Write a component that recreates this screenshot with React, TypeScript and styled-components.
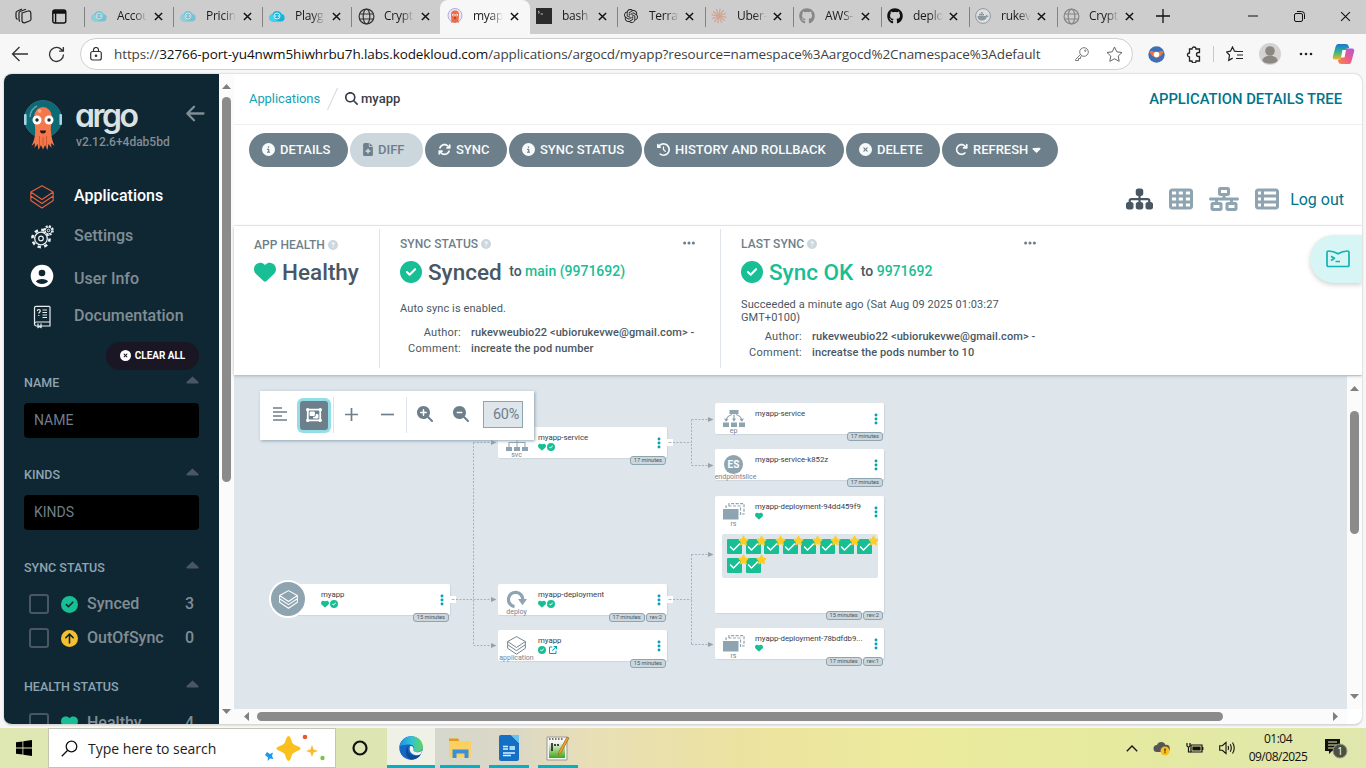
import React from 'react';
import styled, { createGlobalStyle, css } from 'styled-components';
import {
  FaCircleInfo, FaFileMedical, FaArrowsRotate, FaClockRotateLeft, FaCircleXmark, FaArrowRotateRight, FaCaretDown,
  FaSitemap, FaTableCells, FaNetworkWired, FaTableList, FaMagnifyingGlass, FaMagnifyingGlassPlus, FaMagnifyingGlassMinus,
  FaObjectGroup, FaHeart, FaCircleCheck, FaCircleArrowUp, FaCircleQuestion, FaEllipsis,
  FaStar, FaCheck, FaGithub, FaArrowUpRightFromSquare,
} from 'react-icons/fa6';
import { SiOpenai } from 'react-icons/si';

const GREEN = '#18be94';
const SLATE = '#6d7f8b';
const STEEL = '#8fa4b1';

const Global = createGlobalStyle`
  html, body { margin: 0; padding: 0; overflow: hidden; }
  * { box-sizing: border-box; }
  svg { display: block; flex: none; }
`;

const Screen = styled.div`
  width: 1366px;
  height: 768px;
  display: flex;
  flex-direction: column;
  overflow: hidden;
  background: #f7f7f7;
  font-family: Roboto, 'Liberation Sans', sans-serif;
  color: #495763;
`;

/* ---------- browser chrome ---------- */

const TabStrip = styled.div`
  height: 34px;
  flex: none;
  display: flex;
  background: #cdcdcd;
  font-family: 'Open Sans', 'Noto Sans', sans-serif;
`;
const StripTools = styled.div`
  width: 84px;
  display: flex;
  align-items: center;
  padding: 0 0 2px 15px;
  gap: 20px;
`;
const Tab = styled.div<{ $w: number; $active?: boolean; $line?: boolean }>`
  width: ${p => p.$w}px;
  height: 34px;
  display: flex;
  align-items: center;
  padding: 0 0 2px ${p => (p.$w > 88 ? 7 : 6)}px;
  position: relative;
  ${p => p.$active && css`background: #f7f7f7; border-radius: 8px 8px 0 0; z-index: 1;`}
  ${p => p.$line && css`
    &::before { content: ''; position: absolute; left: 0; top: 7px; width: 1px; height: 20px; background: #828282; }
  `}
`;
const TabIcon = styled.span<{ $faded?: boolean }>`
  width: 16px;
  height: 16px;
  display: flex;
  align-items: center;
  justify-content: center;
  opacity: ${p => (p.$faded ? 0.45 : 1)};
`;
const TabText = styled.span`
  width: 34px;
  margin-left: 10px;
  white-space: nowrap;
  font-size: 12px;
  line-height: 18px;
  color: #1b1b1b;
  letter-spacing: -0.25px;
  mask-image: linear-gradient(90deg, #000 50%, transparent 88%);
`;
const TabClose = styled.span<{ $gap: number }>`
  margin-left: ${p => p.$gap}px;
`;
const WindowButtons = styled.div`
  flex: 1;
  display: flex;
  align-items: center;
  padding: 0 15px 2px 11px;
`;
const Push = styled.span`
  flex: 1;
`;
const AddressRow = styled.div`
  height: 40px;
  flex: none;
  display: flex;
  align-items: center;
  padding: 0 11px 0 11px;
`;
const NavIcons = styled.div`
  width: 69px;
  display: flex;
  gap: 19px;
`;
const AddressBar = styled.div`
  width: 1053px;
  height: 32px;
  border: 1px solid #cfcfcf;
  border-radius: 16px;
  background: #fff;
  display: flex;
  align-items: center;
  padding: 0 9px 0 9px;
  font-family: 'Open Sans', 'Noto Sans', sans-serif;
`;
const Url = styled.span`
  margin-left: 12px;
  width: 950px;
  white-space: nowrap;
  font-size: 13.5px;
  letter-spacing: -0.105px;
  color: #3f3f3f;
  b { font-weight: 400; color: #101010; }
`;
const Extensions = styled.div`
  display: flex;
  align-items: center;
  flex: 1;
  padding-left: 15px;
`;
const ThinRule = styled.span`
  width: 1px;
  height: 16px;
  background: #c8c8c8;
  margin: 0 12px 0 11px;
`;

/* ---------- application frame ---------- */

const Frame = styled.div`
  width: 1358px;
  height: 651px;
  flex: none;
  margin-left: 4px;
  margin-bottom: 3px;
  display: flex;
  border-radius: 8px;
  overflow: hidden;
  background: #fff;
  border-bottom: 1px solid #d9d9d9;
  box-shadow: 0 0 2px rgba(0, 0, 0, 0.3);
`;
const Sidebar = styled.aside`
  width: 215px;
  background: #0f2733;
  overflow: hidden;
  flex: none;
  padding: 0 20px;
  color: ${SLATE};
  display: flex;
  flex-direction: column;
`;
const Brand = styled.div`
  height: 103px;
  flex: none;
  display: flex;
  padding-top: 26px;
`;
const BrandText = styled.div`
  width: 110px;
  flex: none;
  margin-left: 14px;
`;
const Wordmark = styled.div`
  font-family: Inter, sans-serif;
  font-feature-settings: 'cv11', 'ss03';
  font-size: 32px;
  font-weight: 600;
  line-height: 36px;
  margin: -2px 0 0 -1px;
  height: 37px;
  letter-spacing: -2.500px;
  color: #dbe2e3;
`;
const Version = styled.div`
  font-size: 12px;
  line-height: 14px;
  font-weight: 500;
  color: #818d94;
`;
const NavRow = styled.div<{ $h: number; $on?: boolean }>`
  height: ${p => p.$h}px;
  flex: none;
  display: flex;
  align-items: center;
  font-size: 16px;
  font-weight: 500;
  color: ${p => (p.$on ? '#fff' : '#818d94')};
`;
const NavIcon = styled.span`
  width: 50px;
  padding-left: 6px;
`;
const NavLabel = styled.span<{ $above?: number; $below?: number }>`
  padding: ${p => p.$above || 0}px 0 ${p => p.$below || 0}px;
`;
const ClearAll = styled.div`
  width: 93px;
  height: 28px;
  flex: none;
  margin: 3px 0 0 82px;
  padding-bottom: 1px;
  border-radius: 14px;
  background: #1a1624;
  color: #fff;
  font-size: 10px;
  font-weight: 700;
  display: flex;
  align-items: center;
  justify-content: center;
  gap: 4px;
  letter-spacing: -0.05px;
`;
const FilterTitle = styled.div<{ $top: number }>`
  margin-top: ${p => p.$top}px;
  height: 16px;
  flex: none;
  display: flex;
  align-items: center;
  justify-content: space-between;
  padding-bottom: 2px;
  font-size: 12.5px;
  font-weight: 500;
  color: ${STEEL};
  svg { margin-bottom: 4px; }
`;
const FilterBox = styled.div`
  margin-top: 12px;
  height: 35px;
  flex: none;
  border-radius: 4px;
  background: #000;
  color: ${SLATE};
  font-size: 14px;
  line-height: 34px;
  padding-left: 10px;
`;
const FilterOption = styled.div<{ $top?: number }>`
  height: 34px;
  margin-top: ${p => p.$top || 0}px;
  flex: none;
  display: flex;
  align-items: center;
  padding: 0 5px;
  font-size: 16px;
  font-weight: 500;
  color: #818d94;
`;
const Checkbox = styled.span`
  width: 20px;
  height: 20px;
  border: 2px solid #495763;
  border-radius: 3px;
  margin-right: 12px;
`;
const OptionName = styled.span`
  flex: 1;
  padding: 0 0 2px 9px;
`;
const OptionCount = styled.span`
  padding-bottom: 2px;
`;

const ScrollColumn = styled.div`
  width: 15px;
  flex: none;
  background: #fbfbfb;
  display: flex;
  flex-direction: column;
  align-items: center;
  padding: 8px 0;
`;
const ScrollRow = styled.div`
  width: 1113px;
  height: 15px;
  background: #fbfbfb;
  display: flex;
  align-items: center;
  padding: 0 7px 0 8px;
`;
const Thumb = styled.span<{ $w: number; $h: number; $m?: string }>`
  width: ${p => p.$w}px;
  height: ${p => p.$h}px;
  margin: ${p => p.$m || 0};
  flex: none;
  border-radius: 5px;
  background: #8b8b8b;
`;

const Main = styled.main`
  width: 1128px;
  display: flex;
  flex-direction: column;
  position: relative;
`;
const TopBar = styled.div`
  height: 51px;
  flex: none;
  border-bottom: 1px solid #eceef0;
  display: flex;
  align-items: center;
  padding: 0 20px 1px 15px;
  font-size: 13px;
`;
const Crumb = styled.span`
  color: #16a2b5;
  letter-spacing: -0.08px;
`;
const CrumbCurrent = styled.span`
  margin-left: 3px;
  font-weight: 500;
  color: #363c4a;
`;
const PageTitle = styled.span`
  margin-left: auto;
  font-size: 14.8px;
  font-weight: 500;
  color: #00748c;
`;
const Actions = styled.div`
  height: 101px;
  flex: none;
  border-bottom: 1px solid #eceef0;
  padding: 8px 18px 0 15px;
`;
const ButtonRow = styled.div`
  display: flex;
  gap: 2px;
`;
const ActionButton = styled.div<{ $w: number; $off?: boolean }>`
  width: ${p => p.$w}px;
  height: 34px;
  border-radius: 17px;
  padding: 0 0 2px 13px;
  display: flex;
  align-items: center;
  gap: 5px;
  white-space: nowrap;
  font-size: 13px;
  font-weight: 500;
  background: ${p => (p.$off ? '#ccd6dd' : SLATE)};
  color: ${p => (p.$off ? SLATE : '#f8fbfb')};
`;
const ViewRow = styled.div`
  display: flex;
  align-items: center;
  justify-content: flex-end;
  gap: 16px;
  height: 24px;
  margin-top: 20px;
  color: ${STEEL};
`;
const LogOut = styled.span`
  margin-left: -5px;
  font-size: 16px;
  color: #00748c;
`;
const StatusPanel = styled.div`
  height: 149px;
  flex: none;
  display: flex;
  padding-top: 3px;
  box-shadow: 0 1px 3px rgba(109, 127, 139, 0.5);
  z-index: 1;
  background: #fff;
`;
const StatusColumn = styled.div<{ $w: number; $line?: boolean; $top?: number }>`
  width: ${p => p.$w}px;
  height: 139px;
  padding: ${p => p.$top || 7}px ${p => (p.$line ? 19 : 20)}px 0 20px;
  ${p => p.$line && css`border-right: 1px solid #dee4e9;`}
`;
const StatusLabel = styled.div`
  height: 16px;
  display: flex;
  align-items: center;
  gap: 3px;
  font-size: 12px;
  font-weight: 500;
  letter-spacing: 0.05px;
  color: ${SLATE};
`;
const More = styled.span`
  margin: -3px 5px 0 auto;
`;
const StatusValue = styled.div<{ $green?: boolean; $top?: number }>`
  height: 26px;
  margin-top: ${p => p.$top || 7}px;
  display: flex;
  align-items: center;
  gap: 6px;
  white-space: nowrap;
  font-size: 22.5px;
  font-weight: 500;
  color: ${p => (p.$green ? GREEN : '#495763')};
`;
const Revision = styled.span`
  margin: 0 0 2px 1.5px;
  font-size: 14px;
  color: #495763;
  em { font-style: normal; color: ${GREEN}; }
`;
const Note = styled.div<{ $top: number }>`
  margin-top: ${p => p.$top}px;
  font-size: 11px;
  line-height: 13px;
  letter-spacing: 0.1px;
`;
const Facts = styled.dl<{ $top: number }>`
  margin: ${p => p.$top}px 0 0;
  display: grid;
  grid-template-columns: 61px 1fr;
  column-gap: 10px;
  font-size: 11px;
  line-height: 16px;
  white-space: nowrap;
  dt { text-align: right; letter-spacing: 0.25px; }
  dd { margin: 0; font-weight: 500; letter-spacing: 0.1px; }
`;
const Flyout = styled.div`
  position: absolute;
  right: 0;
  top: 161px;
  width: 52px;
  height: 48px;
  border-radius: 24px 0 0 24px;
  background: #d7f5f4;
  box-shadow: 0 2px 5px rgba(0, 0, 0, 0.18);
  display: flex;
  align-items: center;
  padding-left: 16px;
  z-index: 2;
`;
const GraphArea = styled.div`
  flex: 1;
  display: flex;
  padding-top: 1px;
  background: #dee5eb;
`;
const Graph = styled.div`
  width: 1113px;
  height: 333px;
  position: relative;
  overflow: hidden;
  background: #dee5eb;
`;
const GraphTools = styled.div`
  position: absolute;
  left: 26px;
  top: 15px;
  width: 274px;
  height: 49px;
  z-index: 2;
  background: #fff;
  box-shadow: 1px 1px 3px ${STEEL};
  display: flex;
  align-items: center;
  color: ${SLATE};
`;
const Tool = styled.span<{ $w: number; $right?: number }>`
  width: ${p => p.$w}px;
  display: flex;
  justify-content: center;
  padding: 0 ${p => p.$right || 0}px 3px 0;
`;
const ToolOn = styled.span`
  width: 28px;
  height: 29px;
  margin: 0 5px 0 0;
  padding-bottom: 1px;
  border-radius: 3px;
  background: ${SLATE};
  box-shadow: 0 0 0 3px #93dfe7;
  color: #fff;
  display: flex;
  align-items: center;
  justify-content: center;
`;
const ToolRule = styled.span`
  width: 1px;
  height: 36px;
  margin-bottom: 1px;
  background: #dee4e9;
`;
const ZoomValue = styled.span`
  width: 40px;
  height: 27px;
  margin: 0 0 2px 4px;
  border: 1px solid ${STEEL};
  background: #dee5eb;
  font-size: 14.4px;
  line-height: 25px;
  text-align: right;
  padding-right: 3px;
  letter-spacing: -0.2px;
`;

/* resource cards on the free graph canvas */
const Card = styled.div<{ $x: number; $y: number; $w?: number; $h?: number }>`
  position: absolute;
  left: ${p => p.$x}px;
  top: ${p => p.$y}px;
  width: ${p => p.$w || 169}px;
  height: ${p => p.$h || 31}px;
  border-radius: 2px;
  background: #fff;
  box-shadow: 1px 1px 1px #ccd6dd;
  display: flex;
`;
const Kind = styled.div`
  width: 37px;
  height: 31px;
  padding-top: 6px;
  display: flex;
  flex-direction: column;
  align-items: center;
  color: ${STEEL};
`;
const KindName = styled.span<{ $shift?: number }>`
  font-size: 7px;
  line-height: 7px;
  margin-left: ${p => p.$shift || 0}px;
  color: #74848f;
  white-space: nowrap;
`;
const Info = styled.div<{ $pad?: number }>`
  flex: 1;
  padding: 6px 0 0 ${p => p.$pad ?? 3}px;
`;
const Name = styled.div`
  font-size: 7.8px;
  line-height: 9px;
  letter-spacing: -0.02px;
  white-space: nowrap;
  color: #363c4a;
`;
const Marks = styled.div`
  display: flex;
  gap: 1px;
  margin-top: 1px;
  color: ${GREEN};
`;
const ExternalLink = styled.span`
  margin-left: 2px;
  color: #00a2b3;
`;
const Menu = styled.span`
  width: 16px;
  height: 31px;
  display: flex;
  align-items: center;
  justify-content: center;
`;
const Tags = styled.div`
  position: absolute;
  right: 1px;
  bottom: -6.5px;
  display: flex;
  gap: 1px;
`;
const Tag = styled.span`
  height: 9px;
  border: 1px solid ${STEEL};
  border-radius: 3px;
  background: #ccd6dd;
  padding: 0 3px;
  font-size: 5.7px;
  line-height: 7px;
  white-space: nowrap;
`;
const Collapse = styled.span`
  position: absolute;
  left: 100%;
  top: 12px;
  width: 6px;
  height: 7px;
  background: #fff;
  font-size: 6px;
  line-height: 6px;
  text-align: center;
`;
const RootBadge = styled.div`
  position: absolute;
  left: -19px;
  top: -4px;
  width: 38px;
  height: 38px;
  border-radius: 50%;
  border: 2px solid #fff;
  background: ${STEEL};
  color: #fff;
  display: flex;
  align-items: center;
  justify-content: center;
`;
const EndpointDisc = styled.span`
  width: 19px;
  height: 19px;
  border-radius: 50%;
  background: ${STEEL};
  color: #fff;
  font-size: 10px;
  font-weight: 700;
  line-height: 19px;
  text-align: center;
`;
const PodGroup = styled.div`
  position: absolute;
  left: 7px;
  top: 38px;
  width: 156px;
  height: 44px;
  border-radius: 2px;
  background: #dee5eb;
  display: flex;
  flex-wrap: wrap;
  align-content: flex-start;
  gap: 3.6px;
  padding: 5px;
`;
const Pod = styled.span`
  width: 15px;
  height: 15px;
  border-radius: 1px;
  background: ${GREEN};
  color: #fff;
  position: relative;
  display: flex;
  align-items: center;
  justify-content: center;
`;
const PodStar = styled.span`
  position: absolute;
  z-index: 1;
  right: -6.5px;
  top: -4px;
  color: #ffce25;
`;
const Edges = styled.svg`
  position: absolute;
  left: 0;
  top: 0;
`;

/* ---------- taskbar ---------- */

const Taskbar = styled.div`
  height: 40px;
  flex: none;
  display: flex;
  align-items: center;
  font-family: 'Open Sans', 'Noto Sans', sans-serif;
  background: linear-gradient(90deg, #dfe7b3 0, #dde5b2 385px, #d6d7cd 440px, #dcd8c4 520px, #e8dfb6 590px, #ece2a0 740px, #ecea9d 900px, #e6ea9f 1100px, #dfe7ad 1366px);
`;
const StartButton = styled.span`
  width: 48px;
  padding-left: 16px;
`;
const SearchBox = styled.div`
  width: 288px;
  height: 40px;
  background: #fff;
  border: 1px solid #c4c6b4;
  display: flex;
  align-items: center;
  padding-left: 12px;
  font-size: 14px;
  letter-spacing: -0.03px;
  color: #1c1c1c;
`;
const SearchText = styled.span`
  width: 186px;
  padding-left: 10px;
  white-space: nowrap;
`;
const TaskIcon = styled.span<{ $w: number; $on?: boolean; $bar?: number }>`
  width: ${p => p.$w}px;
  height: 40px;
  display: flex;
  align-items: center;
  justify-content: center;
  position: relative;
  background: ${p => (p.$on ? '#f0f1e6' : 'transparent')};
  ${p => p.$bar && css`
    &::after { content: ''; position: absolute; bottom: 0; width: ${p.$bar}px; height: 3px; background: #00b3c4; }
  `}
`;
const TaskGap = styled.span`
  width: 3px;
`;
const Tray = styled.div`
  margin-left: auto;
  display: flex;
  align-items: center;
  gap: 15px;
  padding-right: 18px;
`;
const Clock = styled.div`
  width: 62px;
  text-align: center;
  font-size: 12px;
  line-height: 18px;
  letter-spacing: -0.5px;
  color: #111;
  margin: 0 0 0 -4px;
  white-space: nowrap;
`;

/* ---------- drawings ---------- */

const Cross = ({ s = 10, w = 1.4 }: { s?: number; w?: number }) => (
  <svg width={s} height={s} viewBox="0 0 10 10" fill="none" stroke="#111" strokeWidth={w}><path d="M1 1l8 8M9 1l-8 8" /></svg>
);
const CloudIcon = () => (
  <svg width="16" height="12" viewBox="0 0 16 12"><path d="M4 11.5a3.8 3.8 0 0 1-.6-7.5A5 5 0 0 1 12.6 4a3.8 3.8 0 0 1-.4 7.5z" fill="#14b5dd" /><path d="M4 11.5a3.8 3.8 0 0 1-.6-7.5L8 11.5z" fill="#3fd2ee" /><circle cx="8" cy="6" r="3" fill="none" stroke="#d9f4fa" /><path d="M7.2 5l-1 1 1 1M8.8 5l1 1-1 1" stroke="#fff" strokeWidth=".7" fill="none" /></svg>
);
const GlobeIcon = () => (
  <svg width="17" height="17" viewBox="0 0 17 17" fill="none" stroke="#333" strokeWidth="1.2"><circle cx="8.5" cy="8.5" r="7.4" /><ellipse cx="8.5" cy="8.5" rx="3.3" ry="7.4" /><path d="M1.6 6h13.8M1.6 11h13.8" /></svg>
);
const ArgoIcon = () => (
  <svg width="16" height="16" viewBox="0 0 16 16"><circle cx="8" cy="7.5" r="7" fill="#ece6f5" stroke="#a79bd0" strokeWidth=".8" /><path d="M4 6.500a4 4 0 0 1 8 0c0 3-.6 5-.4 8.500l-1.600-1-2 1-2-1-1.600 1C4.600 11.500 4 9 4 6.500z" fill="#ef6c43" /><circle cx="6.300" cy="7" r="1.300" fill="#fff" /><circle cx="9.700" cy="7" r="1.300" fill="#fff" /><circle cx="6.300" cy="7" r=".6" fill="#333" /><circle cx="9.700" cy="7" r=".6" fill="#333" /><path d="M7 9.500h2v1H7z" fill="#6b2a1c" /></svg>
);
const BashIcon = () => (
  <svg width="16" height="16" viewBox="0 0 16 16"><path d="M0 0h16v16H0z" fill="#2b2b2b" /><path d="M2 3l1.500 1.200L2 5.400M4.500 6H7" stroke="#ddd" fill="none" strokeWidth=".8" /></svg>
);
const BurstIcon = () => (
  <svg width="16" height="16" viewBox="0 0 16 16" stroke="#d97757" strokeWidth="1.300" strokeLinecap="round">
    {Array.from({ length: 12 }, (_, i) => {
      const a = (i * Math.PI) / 6 + 0.15;
      return <path key={i} d={`M8 8L${8 + 7 * Math.cos(a)} ${8 + 7 * Math.sin(a)}`} />;
    })}
  </svg>
);
const DockerIcon = () => (
  <svg width="16" height="16" viewBox="0 0 16 16"><circle cx="8" cy="8" r="7.400" fill="#f2f6f8" stroke="#3f5a6c" strokeWidth="1" /><path d="M2.500 8h8.300c.2-1 .8-1.500 1.200-1.600.3.500.4 1 .3 1.400.5-.1 1 0 1.300.2-.4.8-1 1-1.800 1C11 11.700 9.200 12.500 7 12.500 4 12.500 2.500 11 2.500 8zM4 5.800h5v1.700H4zM6 4h1.600v1.600H6z" fill="#3f5a6c" /></svg>
);
const Mascot = () => (
  <svg width="38" height="50" viewBox="0 0 38 50">
    <circle cx="19" cy="19" r="18.500" fill="#0b6a73" stroke="#2d6a80" strokeWidth="1" />
    <path d="M6 17A13 13 0 0 1 13 6" stroke="#5ea7ab" strokeWidth="1.500" fill="none" />
    <rect x="0" y="14" width="2.600" height="11" rx="1" fill="#a9d3e4" /><rect x="35.400" y="14" width="2.600" height="11" rx="1" fill="#a9d3e4" />
    <path d="M10 17a9 10 0 0 1 18 0c0 6-1.500 9-1 15 .3 5 1.500 9 3.500 14l-3.500-3 .5 5-3-4-1 6-2.500-5-2 4.500-2-4.500-2.500 5-1-6-3 4 .5-5-3.500 3C10 41 11 37 11.200 32 11.500 26 10 23 10 17z" fill="#f4784b" />
    <path d="M15.500 36v11M19 37v8M22.500 36v11" stroke="#c94f2d" strokeWidth=".8" />
    <circle cx="13" cy="20" r="4.500" fill="#fff" /><circle cx="25" cy="20" r="4.500" fill="#fff" />
    <circle cx="13" cy="20" r="1.700" fill="#1c2730" /><circle cx="25" cy="20" r="1.700" fill="#1c2730" />
    <path d="M16 30.500h6a3 3 0 0 1-6 0z" fill="#2d1614" /><circle cx="15.500" cy="11" r="2" fill="#f8a886" />
  </svg>
);
const Layers = ({ size = 24, color, w = 1.1 }: { size?: number; color: string; w?: number }) => (
  <svg width={size} height={size} viewBox="0 0 24 24" fill="none" stroke={color} strokeWidth={w} strokeLinejoin="round">
    <path d="M12 .8l11.200 6.200L12 14.500.8 7zM.8 7v4L12 18.500 23.200 11V7M.8 11v4.500L12 23l11.200-7.500V11" />
  </svg>
);
const GearIcon = () => (
  <svg width="24" height="24" viewBox="0 0 24 24" fill="none" stroke="#e9eef0">
    <circle cx="11" cy="13.500" r="6.300" strokeWidth="1.300" /><circle cx="11" cy="13.500" r="8.600" strokeWidth="2.600" strokeDasharray="3.400 3.350" />
    <circle cx="11" cy="13.500" r="2.300" strokeWidth="1.200" />
    <circle cx="18.500" cy="5.500" r="4.300" fill="#0f2733" strokeWidth="2" strokeDasharray="2 1.370" /><circle cx="18.500" cy="5.500" r="3.400" fill="#0f2733" /><circle cx="18.500" cy="5.500" r="1.300" />
  </svg>
);
const UserIcon = () => (
  <svg width="24" height="24" viewBox="0 0 24 24"><circle cx="12" cy="12" r="11.300" fill="#fff" /><circle cx="12" cy="9" r="3.300" fill="#0f2733" /><path d="M6 17.500c1-3.400 11-3.400 12 0-2.500 3.200-9.500 3.200-12 0z" fill="#0f2733" /></svg>
);
const BookIcon = () => (
  <svg width="24" height="24" viewBox="0 0 24 24" fill="none" stroke="#e9eef0" strokeWidth="1.200">
    <path d="M4.500 3A1.700 1.700 0 0 1 6.200 1.300H19a1 1 0 0 1 1 1V21H6.500a2 2 0 0 1-2-2zM4.500 19a2 2 0 0 1 2-2H20M8 18.500v4l1.500-1 1.500 1v-4" />
    <path d="M7.300 6c0-2 3-2 3 0 0 1.200-1.500 1.200-1.500 2.500M8.800 10v1M12.500 5h4.500M12.500 7.500h4.500M12.500 10h4.500M12.500 12.500h4.500" />
  </svg>
);
const Arrow = ({ dir }: { dir: 'up' | 'down' | 'left' | 'right' }) => {
  const d = { up: 'M0 7L4.500 2 9 7z', down: 'M0 2h9L4.500 7z', left: 'M7 0v9L2 4.500z', right: 'M2 0v9l5-4.500z' }[dir];
  return <svg width="9" height="9" viewBox="0 0 9 9" fill="#7f7f7f"><path d={d} /></svg>;
};
const ServiceKind = () => (
  <svg width="22" height="19" viewBox="0 0 22 19" fill={STEEL}><path d="M7.500 1h7v4h-7zM0 14h6v4H0zM8 14h6v4H8zM16 14h6v4h-6zM10.500 5h1v9h-1zM2.500 9h17v1h-17zM2.500 9h1v5h-1zM18.500 9h1v5h-1z" /></svg>
);
const EndpointKind = () => (
  <svg width="22" height="19" viewBox="0 0 22 19" fill={STEEL}><path d="M6.500 1h9v4h-9zM0 13.500h6V18H0zM8 13.500h6V18H8zM16 13.500h6V18h-6z" /><path d="M9 5.500Q4 7 3 11.500M11 5.500v6M13 5.500q5 1.500 6 6" fill="none" stroke={STEEL} strokeWidth="1.200" /><path d="M1 9.500l2 3.200 2.500-2.500zM9 9.500h4l-2 3.300zM21 9.500l-2 3.200-2.500-2.500z" /></svg>
);
const DeployKind = () => (
  <svg width="20" height="19" viewBox="0 0 20 19" fill="none"><path d="M7.500 16.600A7.200 7.200 0 1 1 15.800 10" stroke={STEEL} strokeWidth="3.200" /><path d="M11 9h9l-4.500 6.200z" fill={STEEL} /></svg>
);
const ReplicaKind = () => (
  <svg width="22" height="19" viewBox="0 0 22 19"><path d="M6 4V1.600h15V12h-2" fill="none" stroke={STEEL} strokeWidth="1.200" strokeDasharray="3 1.500" /><path d="M3 6V4h14.500v9" fill="none" stroke={STEEL} strokeWidth="1.200" strokeDasharray="3 1.500" /><path d="M0 7h15.500v10.500H0z" fill={STEEL} /></svg>
);
const TerminalIcon = () => (
  <svg width="24" height="18" viewBox="0 0 24 18" fill="none" stroke="#0fb3b3" strokeWidth="1.700" strokeLinejoin="round"><path d="M1 2.500Q1 1 2.500 1q5 0 9.500 2.800Q16.500 1 21.500 1 23 1 23 2.500v12q0 2-1.500 2h-19Q1 16.500 1 14.500z" /><path d="M5 6.200l3.500 2L5 10.500M9.500 11.500H14" /></svg>
);
const DotsIcon = () => (
  <svg width="4" height="12" viewBox="0 0 4 12" fill="#00a2b3"><circle cx="2" cy="2" r="1.450" /><circle cx="2" cy="6" r="1.450" /><circle cx="2" cy="10" r="1.450" /></svg>
);
const CopilotIcon = () => (
  <svg width="23" height="22" viewBox="0 0 23 22">
    <defs>
      <linearGradient id="cpA" x1="0" y1="0" x2="0" y2="1"><stop offset="0" stopColor="#1b76d3" /><stop offset=".5" stopColor="#2fb58d" /><stop offset="1" stopColor="#f4b52a" /></linearGradient>
      <linearGradient id="cpB" x1="1" y1="0" x2="0" y2="1"><stop offset="0" stopColor="#a65be6" /><stop offset=".5" stopColor="#ee5a8b" /><stop offset="1" stopColor="#fb8a3c" /></linearGradient>
    </defs>
    <path d="M6 1h8q2 0 2.600 2l.6 2q-3 0-4 3l-2 6q-.8 2.500-3 2.500H3Q0 16.500 1 13L3.600 3.500Q4.300 1 6 1z" fill="url(#cpA)" />
    <path d="M17 21H9q-2 0-2.600-2l-.6-2q3 0 4-3l2-6q.8-2.500 3-2.500H20q3 0 2 3.500l-2.600 9.500Q18.700 21 17 21z" fill="url(#cpB)" />
    <path d="M10.500 7h3.500l-1.500 7.500H9z" fill="#fff" />
  </svg>
);
const EdgeLogo = () => (
  <svg width="24" height="24" viewBox="0 0 24 24">
    <defs><linearGradient id="edA" x1="0" y1="0" x2="1" y2="0"><stop offset="0" stopColor="#1f8fe0" /><stop offset=".5" stopColor="#2fc2d6" /><stop offset="1" stopColor="#62d657" /></linearGradient></defs>
    <circle cx="12" cy="12" r="11.700" fill="#1268c3" />
    <path d="M.5 11C1.500 4.500 6.500.3 12.200.3 19 .3 23.700 5 23.700 10.500c0 3.500-2.700 5.700-6 5.700-2.500 0-4-1-3.200-2.200 1.200-2 .3-5.500-4-5.500C5 8.500 1 9.500.5 11z" fill="url(#edA)" />
    <path d="M10 9c-3 4-1 10.500 6 10.800 2.500.1 4.500-.7 6-1.800-2 3.800-5.500 5.700-9.500 5.700C7 23 4.500 14 10 9z" fill="#0b4a94" />
    <path d="M11 10.500c1.500-1.200 4 .5 3.500 3-.5 1.700 1 2.700 3.500 2.700 2 0 4-.6 5.200-1.800L22 18c-6 3.500-13-1-11-7.500z" fill="#f0f3ee" />
  </svg>
);
const FolderIcon = () => (
  <svg width="24" height="24" viewBox="0 0 24 24"><path d="M1 2.500h9l1.500 2.500H1z" fill="#e59a14" /><path d="M1 5h22v16H1z" fill="#fbd063" /><path d="M4.500 22v-8.500h16V22h-4v-4.500h-8V22z" fill="#3b8fd9" /></svg>
);
const WriterIcon = () => (
  <svg width="20" height="26" viewBox="0 0 20 26"><path d="M2 0h10l8 8v16a2 2 0 0 1-2 2H2a2 2 0 0 1-2-2V2a2 2 0 0 1 2-2z" fill="#1470c4" /><path d="M12 0h8v8z" fill="#63c6f0" /><path d="M4 11.500h5M4 14h5M4 18h12M4 20.500h8M11 12.500h5" stroke="#dcefff" strokeWidth="1.300" fill="none" /><path d="M10.500 11h5.500v4h-5.500z" fill="#a8d8f7" /></svg>
);
const NotepadIcon = () => (
  <svg width="24" height="26" viewBox="0 0 24 26"><defs><linearGradient id="npA" x1="0" y1="0" x2="0" y2="1"><stop offset="0" stopColor="#eef5e0" /><stop offset="1" stopColor="#3ea81a" /></linearGradient></defs><path d="M1 2h20v23H1z" fill="#f4f4f0" stroke="#999" /><path d="M3 8h16v15H3z" fill="url(#npA)" /><path d="M3 4h15" stroke="#777" strokeDasharray="1.500 1.500" strokeWidth="2" /><path d="M6 8v8M8 10h2M11 10h2" stroke="#111" strokeWidth="1.500" /><path d="M21 2l2 1-8 15-3 2 1-3.500z" fill="#f0a12a" stroke="#8a5a20" strokeWidth=".6" /></svg>
);
const Sparkles = () => (
  <svg width="62" height="36" viewBox="0 0 62 36">
    <path d="M24.500 6q2 0 3.500 6.500 1 2 7.500 4.500 2 1.500 0 3-6.500 2.500-7.500 4.500-1.500 6.500-3.500 6.500t-3.500-6.500q-1-2-7.500-4.500-2-1.500 0-3 6.500-2.500 7.500-4.500Q22.500 6 24.500 6z" fill="#fcc01c" />
    <path d="M48 15l1.600 4.400L54 21l-4.400 1.600L48 27l-1.600-4.400L42 21l4.400-1.600z" fill="#f8b92a" />
    <path d="M3 22l3 2 3-1.500-1 3.500 1.500 3-3.500-.5L3.500 31 4 27.500 1 25z" fill="#1c9af0" />
    <circle cx="41" cy="7" r="2.300" fill="#e8582f" /><circle cx="58.500" cy="28" r="2.200" fill="#7cc24a" />
  </svg>
);

/* ---------- content ---------- */

const tabs: { w: number; icon: React.ReactNode; text: string; faded?: boolean; active?: boolean; line?: boolean }[] = [
  { w: 89, icon: <CloudIcon />, text: 'Accou', faded: true, line: true },
  { w: 89, icon: <CloudIcon />, text: 'Pricin', faded: true, line: true },
  { w: 89, icon: <CloudIcon />, text: 'Playg', line: true },
  { w: 89, icon: <GlobeIcon />, text: 'Crypt', line: true },
  { w: 90, icon: <ArgoIcon />, text: 'myap', active: true },
  { w: 87, icon: <BashIcon />, text: 'bash' },
  { w: 88, icon: <SiOpenai size={14} color="#222" />, text: 'Terraf', line: true },
  { w: 88, icon: <BurstIcon />, text: 'Uber-', faded: true, line: true },
  { w: 88, icon: <FaGithub size={16} color="#333" />, text: 'AWS-', faded: true, line: true },
  { w: 88, icon: <FaGithub size={16} color="#111" />, text: 'deplo', line: true },
  { w: 88, icon: <DockerIcon />, text: 'rukev', faded: true, line: true },
  { w: 88, icon: <GlobeIcon />, text: 'Crypt', faded: true, line: true },
];

function Browser() {
  return (
    <>
      <TabStrip>
        <StripTools>
          <svg width="17" height="17" viewBox="0 0 17 17" fill="none" stroke="#222" strokeWidth="1.200"><path d="M7 5l6-2q2.500-.5 2.800 2L16 11q0 1.500-1.500 2l-5 1.800Q7.500 15 7 13zM5 13.500Q4 13 4 11V5q0-1 1.500-1.700L11 1.300M2.500 11.500Q1 10.500 1 9V5q0-1.500 1.500-2L7 1" /></svg>
          <svg width="15" height="15" viewBox="0 0 15 15" fill="none" stroke="#111" strokeWidth="1.400"><rect x=".8" y="1" width="13" height="13" rx="2" /><path d="M1 3h13" strokeWidth="3.500" /><path d="M3.600 4v10" /></svg>
        </StripTools>
        {tabs.map((t, i) => (
          <Tab key={i} $w={t.w} $active={t.active} $line={t.line}>
            <TabIcon $faded={t.faded}>{t.icon}</TabIcon>
            <TabText>{t.text}</TabText>
            <TabClose $gap={t.w > 88 ? 3 : 2}><Cross s={9} w={1.600} /></TabClose>
          </Tab>
        ))}
        <WindowButtons>
          <svg width="14" height="14" viewBox="0 0 14 14" stroke="#111" strokeWidth="1.300"><path d="M7 0v14M0 7h14" /></svg>
          <Push />
          <svg width="10" height="2" viewBox="0 0 10 2"><path d="M0 1h10" stroke="#111" /></svg>
          <svg style={{ marginLeft: 36, marginRight: 35 }} width="11" height="11" viewBox="0 0 11 11" fill="none" stroke="#111"><rect x=".5" y="2.500" width="8" height="8" rx="1.500" /><path d="M3 .5h4.500a3 3 0 0 1 3 3V8" /></svg>
          <Cross s={11} w={1} />
        </WindowButtons>
      </TabStrip>
      <AddressRow>
        <NavIcons>
          <svg width="18" height="16" viewBox="0 0 18 16" fill="none" stroke="#333" strokeWidth="1.300"><path d="M17 8H2M8.500 1L1.500 8l7 7" /></svg>
          <svg width="17" height="17" viewBox="0 0 17 17" fill="none" stroke="#333" strokeWidth="1.300"><path d="M15.500 8.500A7 7 0 1 1 12 2.400L15.300 5M15.400 1v4.200h-4.300" /></svg>
        </NavIcons>
        <AddressBar>
          <svg width="12" height="14" viewBox="0 0 12 14" fill="none" stroke="#333" strokeWidth="1.200"><rect x=".7" y="4.500" width="10.600" height="8.500" rx="2" /><path d="M3.500 4.500V3a2.500 2.500 0 0 1 5 0v1.500" /><circle cx="6" cy="8.800" r=".7" fill="#333" /></svg>
          <Url>https://<b>32766-port-yu4nwm5hiwhrbu7h.labs.kodekloud.com</b>/applications/argocd/myapp?resource=namespace%3Aargocd%2Cnamespace%3Adefault</Url>
          <Push />
          <svg width="14" height="14" viewBox="0 0 14 14" fill="none" stroke="#777"><circle cx="9" cy="5" r="4.300" /><path d="M5.500 7.500l-5 5v1h3v-2h2V10l1-1" /><circle cx="10.300" cy="3.700" r=".7" /></svg>
          <svg style={{ marginLeft: 17 }} width="17" height="16" viewBox="0 0 17 16" fill="none" stroke="#666"><path d="M8.500 1l2.300 4.800 5.200.7-3.800 3.600 1 5.200-4.700-2.500-4.700 2.500 1-5.200L1 6.500l5.200-.7z" /></svg>
        </AddressBar>
        <Extensions>
          <svg width="17" height="17" viewBox="0 0 17 17"><circle cx="8.500" cy="8.500" r="8.200" fill="#3f6fb5" /><path d="M.8 5h4l3.700 2 3.700-2h4l-3 4.500-4.700 3-4.700-3z" fill="#e8773c" /><circle cx="8.500" cy="8.500" r="2.800" fill="#fff" /></svg>
          <svg style={{ marginLeft: 20 }} width="17" height="17" viewBox="0 0 17 17" fill="none" stroke="#222" strokeWidth="1.300"><path d="M4.500 3H7a2 2 0 0 1 4 0h3.500v3.500h-1a2 2 0 0 0 0 4h1V15H11a2 2 0 0 1-4 0H4.500v-4a2 2 0 0 1 0-4z" /></svg>
          <ThinRule />
          <svg width="17" height="16" viewBox="0 0 17 16" fill="none" stroke="#222" strokeWidth="1.200"><path d="M11 5.500l-2.500-.3L6.500 1 4.500 5.200.5 6l3 3-.8 5.300 4-2.200M10 5.500h7M11 9h6M10 12.500h7" /></svg>
          <svg style={{ marginLeft: 16 }} width="22" height="22" viewBox="0 0 22 22"><circle cx="11" cy="11" r="11" fill="#d5d3d1" /><circle cx="11" cy="8" r="4.800" fill="#8b8783" /><path d="M3.500 19c-.5-7 15.500-7 15 0-4 3.500-11 3.500-15 0z" fill="#8b8783" transform="translate(0 -1)" /></svg>
          <svg style={{ marginLeft: 18 }} width="14" height="4" viewBox="0 0 14 4" fill="#222"><circle cx="2" cy="2" r="1.300" /><circle cx="7" cy="2" r="1.300" /><circle cx="12" cy="2" r="1.300" /></svg>
          <Push />
          <CopilotIcon />
        </Extensions>
      </AddressRow>
    </>
  );
}

const Caret = () => <svg width="13" height="8" viewBox="0 0 13 8"><path d="M6.500 0.500L12.500 6q.5 1.500-1 1.500h-10Q0 7.500.5 6z" fill="#495763" /></svg>;

function SideMenu() {
  return (
    <Sidebar>
      <Brand>
        <Mascot />
        <BrandText>
          <Wordmark>argo</Wordmark>
          <Version>v2.12.6+4dab5bd</Version>
        </BrandText>
        <svg style={{ marginTop: 5, marginLeft: -1 }} width="20" height="17" viewBox="0 0 20 17" fill="none" stroke="#818d94" strokeWidth="2.300" strokeLinecap="round" strokeLinejoin="round"><path d="M18.500 8.500H2.500M9 1.800L2.300 8.500 9 15.200" /></svg>
      </Brand>
      <NavRow $h={40} $on><NavIcon><Layers color="#e9603f" /></NavIcon><NavLabel $below={3}>Applications</NavLabel></NavRow>
      <NavRow $h={40}><NavIcon><GearIcon /></NavIcon><NavLabel $below={3}>Settings</NavLabel></NavRow>
      <NavRow $h={37}><NavIcon><UserIcon /></NavIcon><NavLabel $above={5}>User Info</NavLabel></NavRow>
      <NavRow $h={45}><NavIcon><BookIcon /></NavIcon><NavLabel $below={3}>Documentation</NavLabel></NavRow>
      <ClearAll><FaCircleXmark size={11} />CLEAR ALL</ClearAll>
      <FilterTitle $top={5}>NAME<Caret /></FilterTitle>
      <FilterBox>NAME</FilterBox>
      <FilterTitle $top={29}>KINDS<Caret /></FilterTitle>
      <FilterBox>KINDS</FilterBox>
      <FilterTitle $top={30}>SYNC STATUS<Caret /></FilterTitle>
      <FilterOption $top={11}><Checkbox /><FaCircleCheck size={17} color={GREEN} /><OptionName>Synced</OptionName><OptionCount>3</OptionCount></FilterOption>
      <FilterOption><Checkbox /><FaCircleArrowUp size={17} color="#f4c030" /><OptionName>OutOfSync</OptionName><OptionCount>0</OptionCount></FilterOption>
      <FilterTitle $top={24}>HEALTH STATUS<Caret /></FilterTitle>
      <FilterOption $top={11}><Checkbox /><FaHeart size={17} color={GREEN} /><OptionName>Healthy</OptionName><OptionCount>4</OptionCount></FilterOption>
    </Sidebar>
  );
}

const Help = () => <FaCircleQuestion size={10} color="#ccd6dd" />;

function StatusBar() {
  return (
    <StatusPanel>
      <StatusColumn $w={146} $line $top={8}>
        <StatusLabel>APP HEALTH <Help /></StatusLabel>
        <StatusValue $top={6}><FaHeart size={22} color={GREEN} />Healthy</StatusValue>
      </StatusColumn>
      <StatusColumn $w={341} $line>
        <StatusLabel>SYNC STATUS <Help /><More><FaEllipsis size={14} /></More></StatusLabel>
        <StatusValue><FaCircleCheck size={22} color={GREEN} />Synced<Revision>to <em>main (9971692)</em></Revision></StatusValue>
        <Note $top={17}>Auto sync is enabled.</Note>
        <Facts $top={10}><dt>Author:</dt><dd>rukevweubio22 &lt;ubiorukevwe@gmail.com&gt; -</dd><dt>Comment:</dt><dd>increate the pod number</dd></Facts>
      </StatusColumn>
      <StatusColumn $w={341}>
        <StatusLabel>LAST SYNC <Help /><More><FaEllipsis size={14} /></More></StatusLabel>
        <StatusValue $green><FaCircleCheck size={22} />Sync OK<Revision>to <em>9971692</em></Revision></StatusValue>
        <Note $top={13}>Succeeded a minute ago (Sat Aug 09 2025 01:03:27 GMT+0100)</Note>
        <Facts $top={5}><dt>Author:</dt><dd>rukevweubio22 &lt;ubiorukevwe@gmail.com&gt; -</dd><dt>Comment:</dt><dd>increatse the pods number to 10</dd></Facts>
      </StatusColumn>
    </StatusPanel>
  );
}

const H = () => <FaHeart size={8} />;
const C = () => <FaCircleCheck size={8} />;

type NodeData = { x: number; y: number; h?: number; icon: React.ReactNode; kind: string; shift?: number; name: string; marks?: React.ReactNode; tags: string[]; open?: boolean; pods?: number };
const nodes: NodeData[] = [
  { x: 264, y: 51, icon: <ServiceKind />, kind: 'svc', name: 'myapp-service', marks: <><H /><C /></>, tags: ['17 minutes'], open: true },
  { x: 264, y: 208, icon: <DeployKind />, kind: 'deploy', name: 'myapp-deployment', marks: <><H /><C /></>, tags: ['17 minutes', 'rev:2'], open: true },
  { x: 264, y: 254, icon: <Layers size={19} color={SLATE} w={1.200} />, kind: 'application', name: 'myapp', marks: <><C /><ExternalLink><FaArrowUpRightFromSquare size={8} /></ExternalLink></>, tags: ['15 minutes'] },
  { x: 481, y: 27.4, icon: <EndpointKind />, kind: 'ep', name: 'myapp-service', tags: ['17 minutes'] },
  { x: 481, y: 73.4, icon: <EndpointDisc>ES</EndpointDisc>, kind: 'endpointslice', shift: 4, name: 'myapp-service-k852z', tags: ['17 minutes'] },
  { x: 481, y: 120, h: 117, icon: <ReplicaKind />, kind: 'rs', name: 'myapp-deployment-94dd459f9', marks: <H />, tags: ['15 minutes', 'rev:2'], pods: 10 },
  { x: 481, y: 252.4, icon: <ReplicaKind />, kind: 'rs', name: 'myapp-deployment-78bdfdb9...', marks: <H />, tags: ['17 minutes', 'rev:1'] },
];

function ResourceGraph() {
  return (
    <Graph>
      <Edges width="1113" height="333" viewBox="0 0 1113 333">
        <g fill="none" stroke="#a3b4bf" strokeDasharray="2 1.500">
          <path d="M222 223.500h36M239.500 66.500v203M239.500 66.500H258M239.500 269.500H258" />
          <path d="M439 66.500h18.500M457.500 43.500v46M457.500 43.500H476M457.500 89.500H476" />
          <path d="M439 223.500h18.500M457.500 178.500v90M457.500 178.500H476M457.500 268.500H476" />
        </g>
        <g fill="#9aa0a3">
          {[[258, 66.5], [258, 223.5], [258, 269.5], [475, 43.5], [475, 89.5], [475, 178.5], [475, 268.5]].map(([x, y], i) => (
            <path key={i} d={`M${x - 1} ${y - 2.5}l5.500 2.500-5.500 2.500z`} />
          ))}
        </g>
      </Edges>
      <Card $x={54} $y={208} $w={162}>
        <RootBadge><Layers size={19} color="#fff" w={1.3} /></RootBadge>
        <Info $pad={33}><Name>myapp</Name><Marks><H /><C /></Marks></Info>
        <Menu><DotsIcon /></Menu>
        <Tags><Tag>15 minutes</Tag></Tags>
        <Collapse>–</Collapse>
      </Card>
      {nodes.map((n, i) => (
        <Card key={i} $x={n.x} $y={n.y} $h={n.h}>
          <Kind>{n.icon}<KindName $shift={n.shift}>{n.kind}</KindName></Kind>
          <Info><Name>{n.name}</Name>{n.marks && <Marks>{n.marks}</Marks>}</Info>
          <Menu><DotsIcon /></Menu>
          {n.pods && (
            <PodGroup>
              {Array.from({ length: n.pods }, (_, k) => (
                <Pod key={k}><FaCheck size={12} /><PodStar><FaStar size={11} /></PodStar></Pod>
              ))}
            </PodGroup>
          )}
          <Tags>{n.tags.map(t => <Tag key={t}>{t}</Tag>)}</Tags>
          {n.open && <Collapse>–</Collapse>}
        </Card>
      ))}
      <GraphTools>
        <Tool $w={40} $right={1}><svg width="14" height="14" viewBox="0 0 14 14" stroke={SLATE} strokeWidth="1.700"><path d="M0 1h9M0 5h14M0 9h9M0 13h14" /></svg></Tool>
        <ToolOn><FaObjectGroup size={16} /></ToolOn>
        <ToolRule />
        <Tool $w={36} $right={1}><svg width="13" height="13" viewBox="0 0 13 13" stroke={SLATE} strokeWidth="1.700"><path d="M6.500 0v13M0 6.500h13" /></svg></Tool>
        <Tool $w={36} $right={1}><svg width="13" height="13" viewBox="0 0 13 13" stroke={SLATE} strokeWidth="1.700"><path d="M0 6.500h13" /></svg></Tool>
        <ToolRule />
        <Tool $w={36} $right={1}><FaMagnifyingGlassPlus size={16} /></Tool>
        <Tool $w={36} $right={1}><FaMagnifyingGlassMinus size={16} /></Tool>
        <ZoomValue>60%</ZoomValue>
      </GraphTools>
    </Graph>
  );
}

export default function App() {
  return (
    <Screen>
      <Global />
      <Browser />
      <Frame>
        <SideMenu />
        <ScrollColumn><Arrow dir="up" /><Thumb $w={9} $h={385} $m="6px 0 auto" /><Arrow dir="down" /></ScrollColumn>
        <Main>
          <TopBar>
            <Crumb>Applications</Crumb>
            <svg style={{ margin: '0 7px' }} width="11" height="22" viewBox="0 0 11 22"><path d="M10.500 0L.5 22" stroke="#ccd6dd" /></svg>
            <FaMagnifyingGlass size={13} color="#363c4a" />
            <CrumbCurrent>myapp</CrumbCurrent>
            <PageTitle>APPLICATION DETAILS TREE</PageTitle>
          </TopBar>
          <Actions>
            <ButtonRow>
              <ActionButton $w={99}><FaCircleInfo size={13} />DETAILS</ActionButton>
              <ActionButton $w={73} $off><FaFileMedical size={13} style={{ width: 10 }} />DIFF</ActionButton>
              <ActionButton $w={82}><FaArrowsRotate size={13} />SYNC</ActionButton>
              <ActionButton $w={133}><FaCircleInfo size={13} />SYNC STATUS</ActionButton>
              <ActionButton $w={200}><FaClockRotateLeft size={13} />HISTORY AND ROLLBACK</ActionButton>
              <ActionButton $w={94}><FaCircleXmark size={13} />DELETE</ActionButton>
              <ActionButton $w={116}><FaArrowRotateRight size={13} />REFRESH<FaCaretDown size={13} style={{ marginLeft: -3 }} /></ActionButton>
            </ButtonRow>
            <ViewRow>
              <FaSitemap size={24} color="#495763" style={{ width: 27 }} />
              <FaTableCells size={24} />
              <FaNetworkWired size={24} style={{ width: 30 }} />
              <FaTableList size={24} />
              <LogOut>Log out</LogOut>
            </ViewRow>
          </Actions>
          <StatusBar />
          <GraphArea>
            <ResourceGraph />
            <ScrollColumn><Arrow dir="up" /><Thumb $w={9} $h={123} $m="18px 0 auto" /><Arrow dir="down" /></ScrollColumn>
          </GraphArea>
          <ScrollRow><Arrow dir="left" /><Thumb $w={966} $h={9} $m="0 auto 0 6px" /><Arrow dir="right" /></ScrollRow>
          <Flyout><TerminalIcon /></Flyout>
        </Main>
      </Frame>
      <Taskbar>
        <StartButton><svg width="16" height="16" viewBox="0 0 16 16"><path d="M0 2.300l6.500-.9v6.200H0zM7.300 1.300L16 0v7.600H7.300zM0 8.400h6.500v6.200L0 13.700zM7.300 8.400H16V16l-8.700-1.300z" /></svg></StartButton>
        <SearchBox>
          <svg width="17" height="17" viewBox="0 0 17 17" fill="none" stroke="#111" strokeWidth="1.300"><circle cx="10.500" cy="6.500" r="5.300" /><path d="M6.700 10.300L.8 16.200" /></svg>
          <SearchText>Type here to search</SearchText>
          <Sparkles />
        </SearchBox>
        <TaskIcon $w={48}><svg width="16" height="16" viewBox="0 0 16 16"><circle cx="8" cy="8" r="6.500" fill="none" stroke="#111" strokeWidth="2.200" /></svg></TaskIcon>
        <TaskGap />
        <TaskIcon $w={48} $on $bar={48}><EdgeLogo /></TaskIcon>
        <TaskIcon $w={50} $bar={40}><FolderIcon /></TaskIcon>
        <TaskIcon $w={48} $bar={40}><WriterIcon /></TaskIcon>
        <TaskIcon $w={49} $bar={40}><NotepadIcon /></TaskIcon>
        <Tray>
          <svg width="12" height="7" viewBox="0 0 12 7" fill="none" stroke="#111" strokeWidth="1.300"><path d="M.8 6.200L6 1l5.200 5.200" /></svg>
          <svg width="18" height="15" viewBox="0 0 18 15"><path d="M4 11a3.500 3.500 0 0 1 0-7 4.500 4.500 0 0 1 8.500 0A3.500 3.500 0 0 1 14 11z" fill="#555" /><circle cx="12" cy="10" r="4.500" fill="#fcc01c" /><path d="M12 7.500v3M12 11.300v1" stroke="#222" strokeWidth="1.200" /></svg>
          <svg width="18" height="14" viewBox="0 0 18 14" fill="none" stroke="#111" strokeWidth="1.200"><path d="M5 4h11v7H5zM16.800 6v3" /><path d="M7 6h7v3H7z" fill="#111" /><path d="M1 2v3q1.500 2 3 0V2M2.500 6v5H5" /></svg>
          <svg width="17" height="14" viewBox="0 0 17 14" fill="none" stroke="#111" strokeWidth="1.100"><path d="M.7 4.700h2.600L7 1.500v11L3.300 9.300H.7zM9 5q1 2 0 4M11.200 3.300q2.200 3.700 0 7.400M13.500 1.500q3.500 5.500 0 11" /></svg>
          <Clock>01:04<br />09/08/2025</Clock>
          <svg width="24" height="22" viewBox="0 0 24 22"><path d="M1 2h15v12H8l-3 3v-3H1z" fill="#111" /><path d="M4 5h9M4 8h9M4 11h6" stroke="#e9edb5" /><circle cx="16" cy="14" r="7" fill="#4b5045" stroke="#9a9d80" /><text x="16" y="17.500" fontSize="10" fill="#fff" textAnchor="middle" fontFamily="Open Sans, sans-serif">1</text></svg>
        </Tray>
      </Taskbar>
    </Screen>
  );
}
